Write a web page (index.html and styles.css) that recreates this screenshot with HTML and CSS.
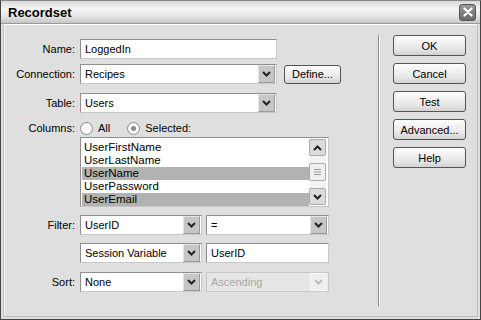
FILE: index.html
```html
<!DOCTYPE html>
<html lang="en">
<head>
    <meta charset="UTF-8">
    <title>Recordset</title>
    <link rel="stylesheet" href="styles.css">
</head>
<body>
<div class="window">
    <div class="titlebar">
        <span class="title">Recordset</span>
        <span class="close">
            <svg width="10" height="10" viewBox="0 0 10 10"><path d="M1.5 1.5 L8.5 8.5 M8.5 1.5 L1.5 8.5" stroke="#fff" stroke-width="2.2" stroke-linecap="round"/></svg>
        </span>
    </div>
    <div class="content">
        <div class="form">
            <label class="lbl row-name">Name:</label>
            <div class="row-name"><div class="field w197">LoggedIn</div></div>

            <label class="lbl row-conn">Connection:</label>
            <div class="row-conn line">
                <div class="select w197"><span class="val">Recipes</span><span class="arrow"><svg width="9" height="6" viewBox="0 0 9 6"><path d="M1 1 L4.5 4.5 L8 1" fill="none" stroke="#222" stroke-width="2"/></svg></span></div>
                <button class="small-btn">Define...</button>
            </div>

            <label class="lbl row-table">Table:</label>
            <div class="row-table"><div class="select w197"><span class="val">Users</span><span class="arrow"><svg width="9" height="6" viewBox="0 0 9 6"><path d="M1 1 L4.5 4.5 L8 1" fill="none" stroke="#222" stroke-width="2"/></svg></span></div></div>

            <label class="lbl row-cols">Columns:</label>
            <div class="row-cols line radios">
                <span class="radio"></span><span class="rtext">All</span>
                <span class="radio on"></span><span class="rtext">Selected:</span>
            </div>

            <div class="row-list list-cell">
                <div class="listbox">
                    <div class="items">
                        <div class="item">UserFirstName</div>
                        <div class="item">UserLastName</div>
                        <div class="item sel">UserName</div>
                        <div class="item">UserPassword</div>
                        <div class="item sel">UserEmail</div>
                    </div>
                    <div class="scroll">
                        <span class="sbtn"><svg width="9" height="6" viewBox="0 0 9 6"><path d="M1 5 L4.5 1.5 L8 5" fill="none" stroke="#222" stroke-width="2"/></svg></span>
                        <span class="track"><span class="thumb"><svg width="7" height="8" viewBox="0 0 7 8"><path d="M0 1.5 H7 M0 4 H7 M0 6.5 H7" stroke="#999" stroke-width="1"/></svg></span></span>
                        <span class="sbtn"><svg width="9" height="6" viewBox="0 0 9 6"><path d="M1 1 L4.5 4.5 L8 1" fill="none" stroke="#222" stroke-width="2"/></svg></span>
                    </div>
                </div>
            </div>

            <label class="lbl row-filter">Filter:</label>
            <div class="row-filter line pair">
                <div class="select w122"><span class="val">UserID</span><span class="arrow"><svg width="9" height="6" viewBox="0 0 9 6"><path d="M1 1 L4.5 4.5 L8 1" fill="none" stroke="#222" stroke-width="2"/></svg></span></div>
                <div class="select w123"><span class="val">=</span><span class="arrow"><svg width="9" height="6" viewBox="0 0 9 6"><path d="M1 1 L4.5 4.5 L8 1" fill="none" stroke="#222" stroke-width="2"/></svg></span></div>
            </div>

            <div class="row-sess line pair list-cell">
                <div class="select w122"><span class="val">Session Variable</span><span class="arrow"><svg width="9" height="6" viewBox="0 0 9 6"><path d="M1 1 L4.5 4.5 L8 1" fill="none" stroke="#222" stroke-width="2"/></svg></span></div>
                <div class="field w123">UserID</div>
            </div>

            <label class="lbl row-sort">Sort:</label>
            <div class="row-sort line pair">
                <div class="select w122"><span class="val">None</span><span class="arrow"><svg width="9" height="6" viewBox="0 0 9 6"><path d="M1 1 L4.5 4.5 L8 1" fill="none" stroke="#222" stroke-width="2"/></svg></span></div>
                <div class="select w123 disabled"><span class="val">Ascending</span><span class="arrow"><svg width="9" height="6" viewBox="0 0 9 6"><path d="M1 1 L4.5 4.5 L8 1" fill="none" stroke="#bbb" stroke-width="2"/></svg></span></div>
            </div>
        </div>

        <div class="sep"></div>

        <div class="buttons">
            <button class="btn">OK</button>
            <button class="btn">Cancel</button>
            <button class="btn">Test</button>
            <button class="btn">Advanced...</button>
            <button class="btn">Help</button>
        </div>
    </div>
</div>
</body>
</html>
```

FILE: styles.css
```css
body {
    margin: 0;
    width: 481px;
    height: 320px;
    overflow: hidden;
    font-family: "Liberation Sans", Arial, sans-serif;
    font-size: 11px;
    color: #000;
    background: #dedede;
}
.window {
    box-sizing: border-box;
    width: 481px;
    height: 320px;
    border: 1px solid #444;
    border-top-color: #888;
    background: #dfdfdf;
    display: flex;
    flex-direction: column;
}
.titlebar {
    height: 22px;
    flex: none;
    display: flex;
    align-items: center;
    justify-content: space-between;
    padding: 0 4px 0 7px;
    background: linear-gradient(#d8d8d8, #f6f6f6 35%, #e4e4e4 70%, #c6c6c6);
    border-bottom: 1px solid #9a9a9a;
}
.title {
    font-weight: bold;
    font-size: 13px;
    color: #000;
}
.close {
    width: 15px;
    height: 15px;
    border-radius: 3px;
    background: linear-gradient(#9a9a9a, #6a6a6a);
    border: 1px solid #555;
    display: flex;
    align-items: center;
    justify-content: center;
}
.content {
    flex: 1;
    display: flex;
    border: 1px solid #bdbdbd;
    border-top-color: #fff;
    margin: 0 2px 2px 2px;
    box-shadow: inset 1px 0 0 #f4f4f4;
}
.form {
    width: 340px;
    display: grid;
    grid-template-columns: 71px auto;
    column-gap: 5px;
    align-content: start;
    padding-top: 14px;
}
.lbl {
    text-align: right;
    align-self: center;
}
.line {
    display: flex;
    align-items: center;
    gap: 7px;
}
.pair {
    gap: 4px;
}
.list-cell {
    grid-column: 2;
}
.row-conn { margin-top: 5px; }
.row-table { margin-top: 9px; }
.row-cols { margin-top: 7px; }
.row-list { margin-top: 1px; }
.row-filter { margin-top: 8px; }
.row-sess { margin-top: 8px; }
.row-sort { margin-top: 9px; }

.field, .select {
    box-sizing: border-box;
    height: 20px;
    background: #fff;
    border: 1px solid #8f8f8f;
    border-right-color: #c8c8c8;
    border-bottom-color: #c8c8c8;
    display: flex;
    align-items: center;
}
.field {
    padding-left: 4px;
}
.select .val {
    flex: 1;
    padding-left: 4px;
    white-space: nowrap;
    overflow: hidden;
}
.select .arrow {
    width: 15px;
    height: 16px;
    margin-right: 1px;
    background: #c6c6c6;
    border: 1px solid #e6e6e6;
    border-right-color: #9a9a9a;
    border-bottom-color: #9a9a9a;
    display: flex;
    align-items: center;
    justify-content: center;
}
.select.disabled {
    background: #e6e6e6;
    color: #a8a8a8;
    border-color: #c8c8c8;
}
.select.disabled .arrow {
    background: #efefef;
    border-color: #f6f6f6;
}
.w197 { width: 197px; }
.w122 { width: 122px; }
.w123 { width: 123px; }

.small-btn, .btn {
    font-family: inherit;
    font-size: 11px;
    color: #000;
    border: 1px solid #555;
    border-radius: 3px;
    background: linear-gradient(#fdfdfd, #e6e6e6 70%, #d2d2d2);
    padding: 0;
}
.small-btn {
    width: 57px;
    height: 19px;
}

.radios {
    gap: 0;
    height: 16px;
}
.radio {
    box-sizing: border-box;
    width: 13px;
    height: 13px;
    border-radius: 50%;
    border: 1px solid #8a8a8a;
    background: #fafafa;
    display: flex;
    align-items: center;
    justify-content: center;
}
.radio.on::after {
    content: "";
    width: 5px;
    height: 5px;
    border-radius: 50%;
    background: #8a8a8a;
}
.rtext {
    margin-left: 5px;
    margin-right: 17px;
}

.listbox {
    box-sizing: border-box;
    width: 249px;
    height: 70px;
    background: #fff;
    border: 1px solid #8f8f8f;
    border-right-color: #c8c8c8;
    border-bottom-color: #c8c8c8;
    display: flex;
    padding: 1px;
}
.items {
    flex: 1;
    padding-top: 2px;
}
.item {
    height: 13px;
    line-height: 13px;
    padding-left: 2px;
    font-size: 11.5px;
}
.item.sel {
    background: #b2b2b2;
}
.scroll {
    width: 17px;
    display: flex;
    flex-direction: column;
    justify-content: space-between;
    margin-right: 1px;
}
.sbtn, .thumb {
    box-sizing: border-box;
    width: 17px;
    height: 17px;
    background: #dcdcdc;
    border: 1px solid #aaa;
    border-radius: 2px;
    display: flex;
    align-items: center;
    justify-content: center;
}
.track {
    flex: 1;
    display: flex;
    align-items: center;
    background: #f4f4f4;
}
.thumb {
    height: 18px;
    background: #f0f0f0;
}

.sep {
    width: 1px;
    margin: 10px 0 10px 34px;
    background: #8a8a8a;
    box-shadow: 1px 0 0 #fafafa;
}
.buttons {
    display: flex;
    flex-direction: column;
    gap: 7px;
    padding: 10px 0 0 14px;
}
.btn {
    width: 73px;
    height: 21px;
}
```
